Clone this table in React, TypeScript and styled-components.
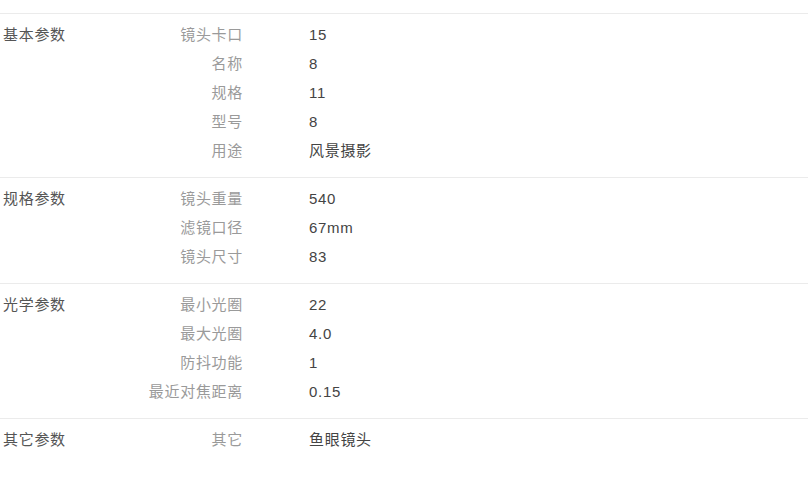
import React from 'react'
import styled, { createGlobalStyle } from 'styled-components'

const GlobalStyle = createGlobalStyle`
  body {
    margin: 0;
    background: #fff;
    font-family: "Liberation Sans", "Noto Sans CJK SC", sans-serif;
  }
`

const Table = styled.div`
  padding-top: 13px;
  font-size: 15px;
  letter-spacing: 0.7px;
`

const Group = styled.div`
  display: flex;
  border-top: 1px solid #ebebeb;
  padding: 6px 0 12px 0;
`

const GroupTitle = styled.div`
  width: 100px;
  padding-left: 3px;
  box-sizing: border-box;
  height: 29px;
  line-height: 30px;
  color: #555;
`

const Rows = styled.div`
  display: flex;
  flex-direction: column;
`

const Row = styled.div`
  display: flex;
  height: 29px;
  line-height: 30px;
`

const Key = styled.div`
  width: 143px;
  text-align: right;
  color: #9a9a9a;
`

const Value = styled.div`
  margin-left: 66px;
  color: #444;
`

type Param = [string, string]
type ParamGroup = { title: string; params: Param[] }

const groups: ParamGroup[] = [
  {
    title: '基本参数',
    params: [
      ['镜头卡口', '15'],
      ['名称', '8'],
      ['规格', '11'],
      ['型号', '8'],
      ['用途', '风景摄影'],
    ],
  },
  {
    title: '规格参数',
    params: [
      ['镜头重量', '540'],
      ['滤镜口径', '67mm'],
      ['镜头尺寸', '83'],
    ],
  },
  {
    title: '光学参数',
    params: [
      ['最小光圈', '22'],
      ['最大光圈', '4.0'],
      ['防抖功能', '1'],
      ['最近对焦距离', '0.15'],
    ],
  },
  {
    title: '其它参数',
    params: [['其它', '鱼眼镜头']],
  },
]

export default function App() {
  return (
    <>
      <GlobalStyle />
      <Table>
        {groups.map((g) => (
          <Group key={g.title}>
            <GroupTitle>{g.title}</GroupTitle>
            <Rows>
              {g.params.map(([k, v]) => (
                <Row key={k}>
                  <Key>{k}</Key>
                  <Value>{v}</Value>
                </Row>
              ))}
            </Rows>
          </Group>
        ))}
      </Table>
    </>
  )
}
